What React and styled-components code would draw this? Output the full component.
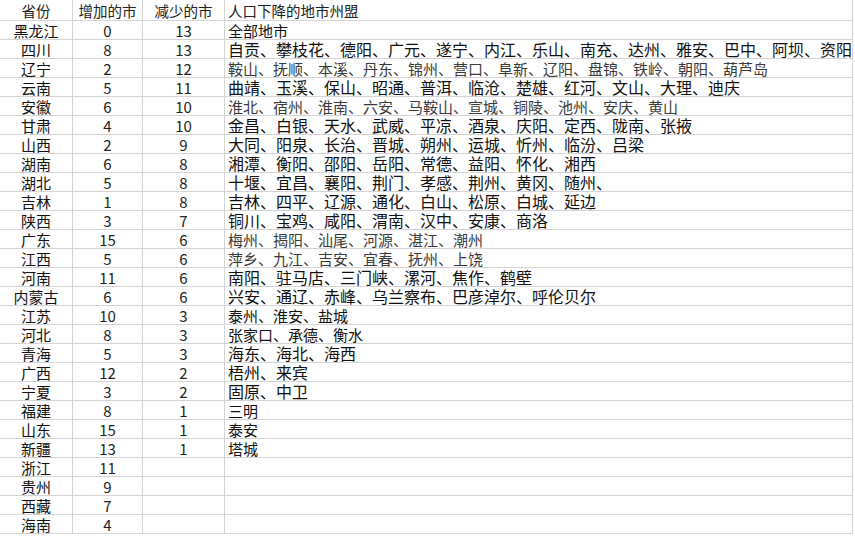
import React from "react";
import styled, { createGlobalStyle } from "styled-components";

const Global = createGlobalStyle`
  html, body {
    margin: 0;
    padding: 0;
    background: #ffffff;
  }
  body {
    font-family: "Noto Sans CJK SC", "Noto Sans", sans-serif;
    color: #111;
  }
`;

const Sheet = styled.div`
  display: grid;
  grid-template-columns: 73px 70px 82px 628px;
  grid-template-rows: 21px;
  grid-auto-rows: 19px;
  width: 853px;
`;

const Cell = styled.div`
  box-sizing: border-box;
  display: flex;
  align-items: center;
  justify-content: ${(p) => (p.left ? "flex-start" : "center")};
  padding-left: ${(p) => (p.left ? "3px" : "0")};
  border-right: 1px solid #d4d4d4;
  border-bottom: 1px solid #d4d4d4;
  font-size: ${(p) => p.size || 15}px;
  line-height: 17px;
  color: ${(p) => (p.soft ? "#3a3a3a" : "#111")};
  white-space: nowrap;
`;

const HeadCell = styled(Cell)`
  font-size: 14.5px;
  color: #222;
`;

const NumCell = styled(Cell)`
  font-size: 15px;
  color: #222;
`;

const rows = [
  ["黑龙江", "0", "13", "全部地市", 15],
  ["四川", "8", "13", "自贡、攀枝花、德阳、广元、遂宁、内江、乐山、南充、达州、雅安、巴中、阿坝、资阳", 16],
  ["辽宁", "2", "12", "鞍山、抚顺、本溪、丹东、锦州、营口、阜新、辽阳、盘锦、铁岭、朝阳、葫芦岛", 15, true],
  ["云南", "5", "11", "曲靖、玉溪、保山、昭通、普洱、临沧、楚雄、红河、文山、大理、迪庆", 16],
  ["安徽", "6", "10", "淮北、宿州、淮南、六安、马鞍山、宣城、铜陵、池州、安庆、黄山", 15, true],
  ["甘肃", "4", "10", "金昌、白银、天水、武威、平凉、酒泉、庆阳、定西、陇南、张掖", 16],
  ["山西", "2", "9", "大同、阳泉、长治、晋城、朔州、运城、忻州、临汾、吕梁", 16],
  ["湖南", "6", "8", "湘潭、衡阳、邵阳、岳阳、常德、益阳、怀化、湘西", 16],
  ["湖北", "5", "8", "十堰、宜昌、襄阳、荆门、孝感、荆州、黄冈、随州、", 16],
  ["吉林", "1", "8", "吉林、四平、辽源、通化、白山、松原、白城、延边", 16],
  ["陕西", "3", "7", "铜川、宝鸡、咸阳、渭南、汉中、安康、商洛", 16],
  ["广东", "15", "6", "梅州、揭阳、汕尾、河源、湛江、潮州", 15, true],
  ["江西", "5", "6", "萍乡、九江、吉安、宜春、抚州、上饶", 15, true],
  ["河南", "11", "6", "南阳、驻马店、三门峡、漯河、焦作、鹤壁", 16],
  ["内蒙古", "6", "6", "兴安、通辽、赤峰、乌兰察布、巴彦淖尔、呼伦贝尔", 16],
  ["江苏", "10", "3", "泰州、淮安、盐城", 15],
  ["河北", "8", "3", "张家口、承德、衡水", 15],
  ["青海", "5", "3", "海东、海北、海西", 16],
  ["广西", "12", "2", "梧州、来宾", 16],
  ["宁夏", "3", "2", "固原、中卫", 16],
  ["福建", "8", "1", "三明", 15],
  ["山东", "15", "1", "泰安", 15],
  ["新疆", "13", "1", "塔城", 15],
  ["浙江", "11", "", ""],
  ["贵州", "9", "", ""],
  ["西藏", "7", "", ""],
  ["海南", "4", "", ""],
];

const App = () => {
  return (
    <>
      <Global />
      <Sheet>
        <HeadCell>省份</HeadCell>
        <HeadCell>增加的市</HeadCell>
        <HeadCell>减少的市</HeadCell>
        <HeadCell left>人口下降的地市州盟</HeadCell>
        {rows.map(([prov, up, down, cities, size, soft]) => (
          <React.Fragment key={prov}>
            <Cell>{prov}</Cell>
            <NumCell>{up}</NumCell>
            <NumCell>{down}</NumCell>
            <Cell left size={size} soft={soft}>
              {cities}
            </Cell>
          </React.Fragment>
        ))}
      </Sheet>
    </>
  );
};

export default App;
